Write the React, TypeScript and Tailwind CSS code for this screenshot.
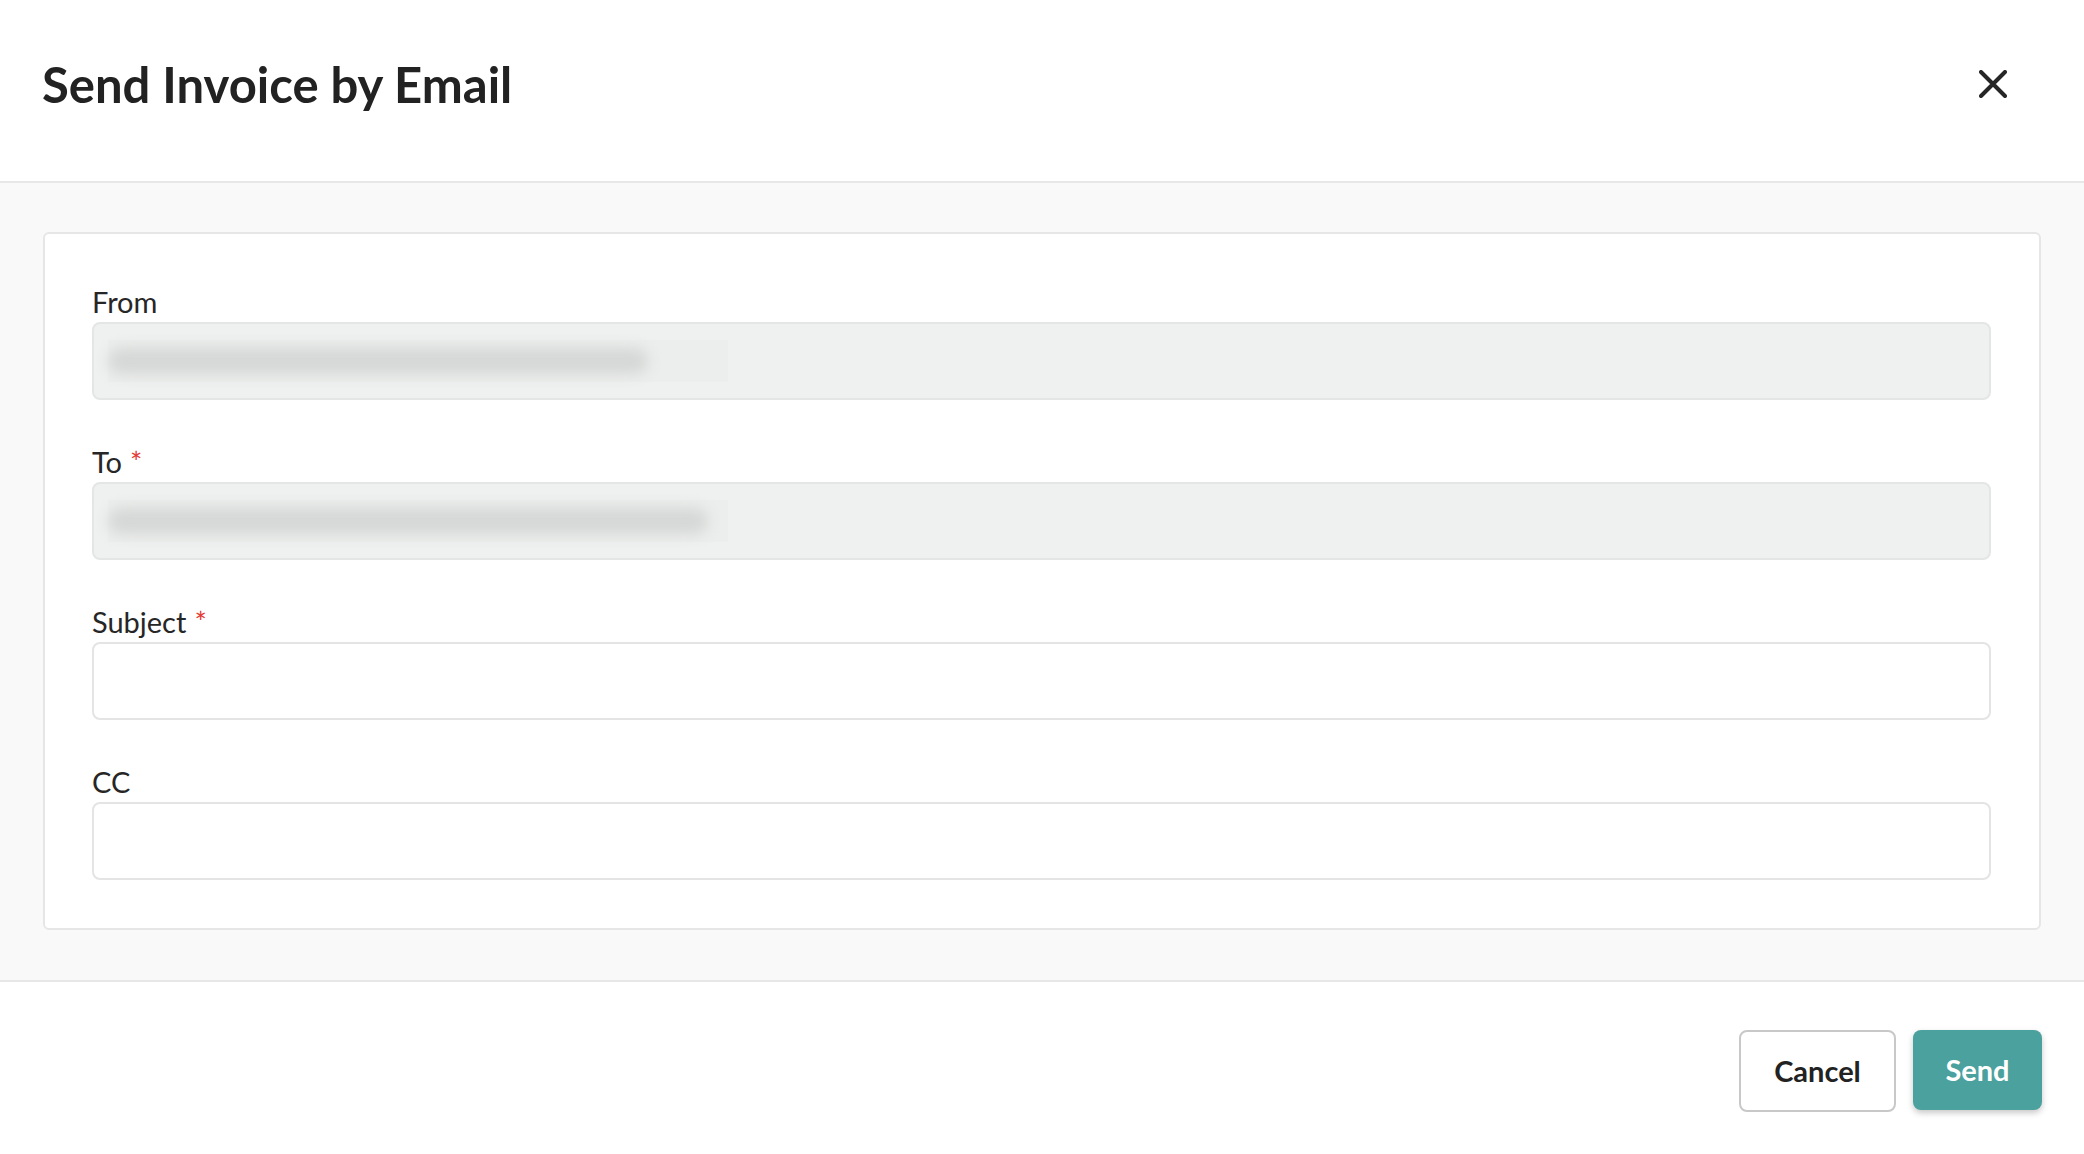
import React from 'react';

const font = { fontFamily: 'Lato, "Open Sans", sans-serif' };

function CloseIcon() {
  return (
    <svg width="28" height="28" viewBox="0 0 28 28" fill="none">
      <path d="M2 2L26 26M26 2L2 26" stroke="#262626" strokeWidth="4" strokeLinecap="round" />
    </svg>
  );
}

function Label({ text, required }: { text: string; required?: boolean }) {
  return (
    <div className="flex items-start h-[34px] text-[29px] leading-[34px] text-[#262626]">
      <span>{text}</span>
      {required && <span className="ml-[8px] text-[#e53935]">*</span>}
    </div>
  );
}

function BlurredInput({ width }: { width: string }) {
  return (
    <div className="h-[78px] rounded-[8px] border-2 border-[#e4e6e5] bg-[#eff1f0] flex items-center pl-[14px]">
      <div className="flex items-center h-[42px] w-[620px] bg-[#eceeed]">
        <div className={`${width} h-[26px] rounded-full bg-[#d5d7d6] blur-[7px]`} />
      </div>
    </div>
  );
}

function TextInput() {
  return <div className="h-[78px] rounded-[8px] border-2 border-[#e4e4e4] bg-white" />;
}

export default function App() {
  return (
    <div className="h-[1154px] flex flex-col bg-white overflow-hidden" style={font}>
      <header className="h-[183px] shrink-0 flex items-center justify-between pl-[42px] pr-[77px] pb-[13px] border-b-2 border-[#e7e7e7]">
        <h1 className="text-[49px] leading-none font-bold text-[#222222]">Send Invoice by Email</h1>
        <CloseIcon />
      </header>

      <section className="bg-[#f9f9f9] pt-[49px] pb-[50px] pl-[43px] pr-[43px] shrink-0">
        <div className="bg-white border-2 border-[#e6e6e6] rounded-[6px] pl-[47px] pr-[48px] pt-[51px] pb-[48px] flex flex-col gap-[45px]">
          <div className="flex flex-col gap-[3px]">
            <Label text="From" />
            <BlurredInput width="w-[540px]" />
          </div>
          <div className="flex flex-col gap-[3px]">
            <Label text="To" required />
            <BlurredInput width="w-[600px]" />
          </div>
          <div className="flex flex-col gap-[3px]">
            <Label text="Subject" required />
            <TextInput />
          </div>
          <div className="flex flex-col gap-[3px]">
            <Label text="CC" />
            <TextInput />
          </div>
        </div>
      </section>

      <footer className="flex-1 border-t-2 border-[#e7e7e7] flex justify-end items-start gap-[17px] pt-[48px] pr-[42px]">
        <button className="w-[157px] h-[82px] rounded-[8px] border-2 border-[#c8c8c8] bg-white text-[29px] font-bold text-[#222222]">
          Cancel
        </button>
        <button className="w-[129px] h-[80px] rounded-[8px] bg-[#4aa19e] text-[29px] font-bold text-white shadow-[0_3px_6px_rgba(0,0,0,0.22)]">
          Send
        </button>
      </footer>
    </div>
  );
}
